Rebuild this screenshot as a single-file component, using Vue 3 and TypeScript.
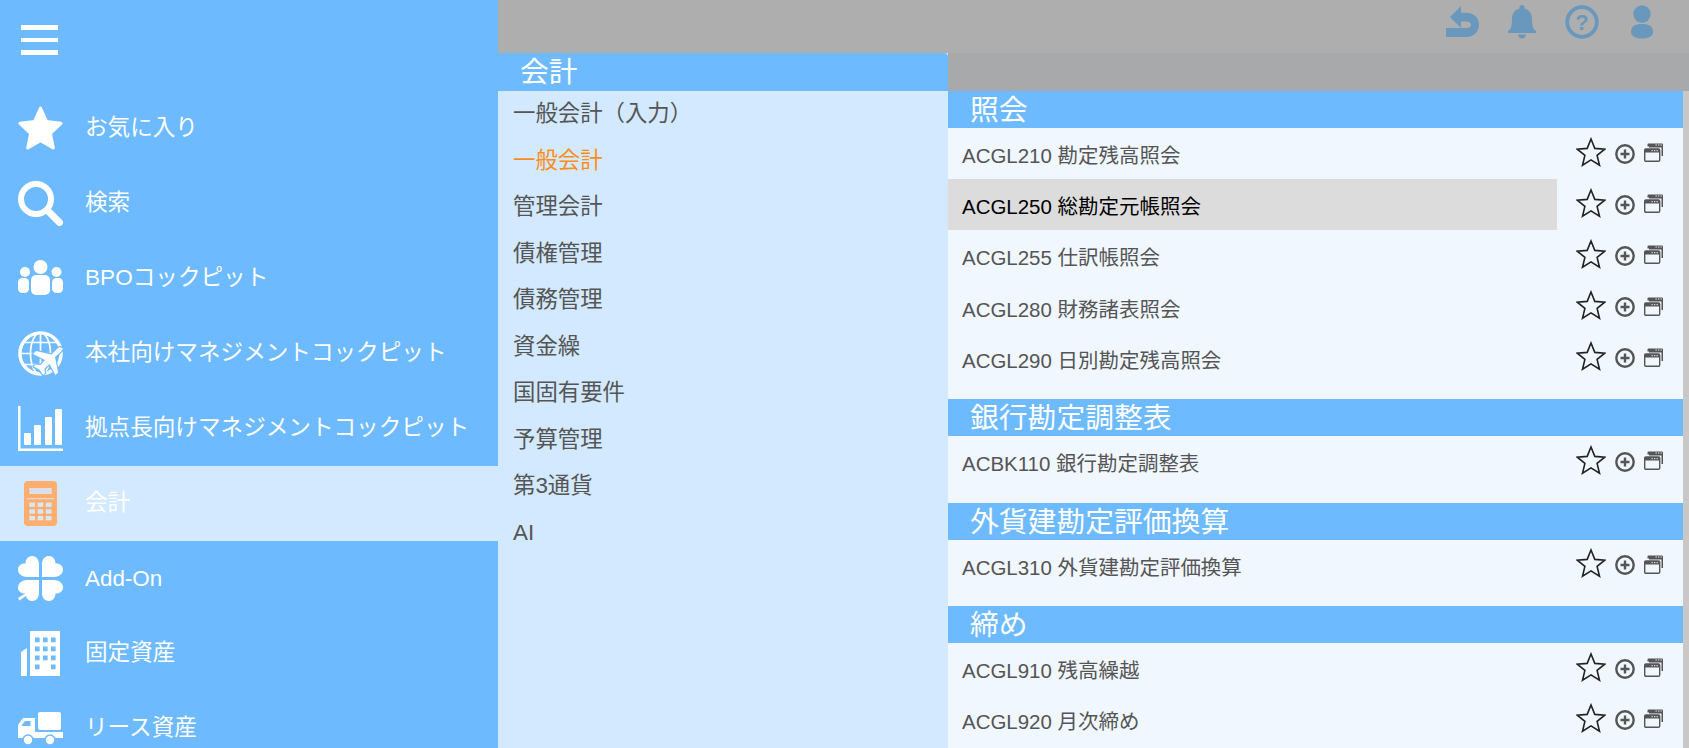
<script setup lang="ts">
interface SideItem { id: string; label: string; active?: boolean; latin?: boolean }
interface Section { title: string; rows: { code: string; hover?: boolean }[] }

const sideItems: SideItem[] = [
  { id: 'star', label: 'お気に入り' },
  { id: 'search', label: '検索' },
  { id: 'group', label: 'BPOコックピット' },
  { id: 'globe', label: '本社向けマネジメントコックピット' },
  { id: 'chart', label: '拠点長向けマネジメントコックピット' },
  { id: 'calc', label: '会計', active: true },
  { id: 'clover', label: 'Add-On', latin: true },
  { id: 'building', label: '固定資産' },
  { id: 'truck', label: 'リース資産' },
]
const midItems = ['一般会計（入力）', '一般会計', '管理会計', '債権管理', '債務管理', '資金繰', '国固有要件', '予算管理', '第3通貨', 'AI']
const sections: Section[] = [
  { title: '照会', rows: [
    { code: 'ACGL210 勘定残高照会' },
    { code: 'ACGL250 総勘定元帳照会', hover: true },
    { code: 'ACGL255 仕訳帳照会' },
    { code: 'ACGL280 財務諸表照会' },
    { code: 'ACGL290 日別勘定残高照会' },
  ] },
  { title: '銀行勘定調整表', rows: [{ code: 'ACBK110 銀行勘定調整表' }] },
  { title: '外貨建勘定評価換算', rows: [{ code: 'ACGL310 外貨建勘定評価換算' }] },
  { title: '締め', rows: [{ code: 'ACGL910 残高繰越' }, { code: 'ACGL920 月次締め' }] },
]
const winCols = [0, 1, 2]
const winRows = [0, 1, 2]
</script>

<template>
  <div class="app">
    <aside class="side">
      <div class="burger"><span></span><span></span><span></span></div>
      <div v-for="it in sideItems" :key="it.id" class="side-item" :class="{ active: it.active }">
        <svg class="side-icon" viewBox="0 0 45 45" width="45" height="45">
          <path v-if="it.id === 'star'" d="M22.5 2 L28.6 15.6 L43 17.3 L32.4 27.3 L35.3 42 L22.5 34.7 L9.7 42 L12.6 27.3 L2 17.3 L16.4 15.6 Z" fill="#fff" stroke="#fff" stroke-width="3" stroke-linejoin="round" />
          <g v-else-if="it.id === 'search'" fill="none" stroke="#fff">
            <circle cx="18" cy="18" r="15" stroke-width="6" />
            <path d="M31.5 31.5 L41.5 41.5" stroke-width="7" stroke-linecap="round" />
          </g>
          <g v-else-if="it.id === 'group'" fill="#fff">
            <circle cx="22.5" cy="11" r="7" />
            <circle cx="7" cy="16" r="5" />
            <circle cx="38.5" cy="16" r="5" />
            <rect x="0" y="22" width="11" height="15" rx="4.5" />
            <rect x="34" y="22" width="11" height="15" rx="4.5" />
            <rect x="13" y="19" width="19" height="20" rx="5" />
          </g>
          <g v-else-if="it.id === 'globe'">
            <g fill="none" stroke="#fff">
              <circle cx="22.5" cy="22.5" r="20.6" stroke-width="3.4" />
              <ellipse cx="22.5" cy="22.5" rx="10" ry="20.8" stroke-width="1.7" />
              <path d="M22.5 2 V43 M2 22.5 H43 M5 11.5 H40 M5 33.5 H40" stroke-width="1.7" />
            </g>
            <path d="M45 18 C43 15.5 41 16 39 18 L33.5 23.5 L18 20 L15 23 L27 29 L22.5 34 L17.5 33.5 L15.5 35.5 L21.5 38.5 L25 44 L27 42 L26.5 37.5 L31.5 33 L37.5 44 L40 41.5 L37 26 L43 20.5 Z" fill="#fff" stroke="#6dbaff" stroke-width="2.4" stroke-linejoin="round" paint-order="stroke" />
          </g>
          <g v-else-if="it.id === 'chart'" fill="#fff">
            <rect x="0" y="0" width="2.5" height="45" />
            <rect x="0" y="42.5" width="45" height="2.5" />
            <rect x="6" y="27" width="7" height="12" rx="1" />
            <rect x="16" y="19" width="7" height="20" rx="1" />
            <rect x="27" y="11" width="7" height="28" rx="1" />
            <rect x="37" y="3" width="7" height="36" rx="1" />
          </g>
          <g v-else-if="it.id === 'calc'">
            <rect x="6" y="0" width="33" height="45" rx="4" fill="#ffae6e" />
            <rect x="11.3" y="7" width="22.4" height="6" fill="#d2e9ff" opacity=".85" />
            <rect x="9" y="17" width="27" height="1.3" fill="#d2e9ff" opacity=".7" />
            <template v-for="r in winRows" :key="r">
              <rect v-for="c in winCols" :key="c" :x="11.3 + c * 8.3" :y="21.6 + r * 6.7" width="5.6" height="4.3" fill="#d2e9ff" />
            </template>
          </g>
          <g v-else-if="it.id === 'clover'" fill="#fff">
            <path d="M21 21 H9 C3 21 0 17 0 13.5 C0 10 3 7.5 6.5 7.5 L7.5 7.5 C7.5 3 10.5 0 14 0 C18 0 21 3 21 8 Z" />
            <path d="M24 21 H36 C42 21 45 17 45 13.5 C45 10 42 7.5 38.5 7.5 L37.5 7.5 C37.5 3 34.5 0 31 0 C27 0 24 3 24 8 Z" />
            <path d="M21 24 H9 C3 24 0 28 0 31.5 C0 35 3 37.5 6.5 37.5 L7.5 37.5 C7.5 42 10.5 45 14 45 C18 45 21 42 21 37 Z" />
            <path d="M24 24 H36 C42 24 45 28 45 31.5 C45 35 42 37.5 38.5 37.5 L37.5 37.5 C37.5 42 34.5 45 31 45 C27 45 24 42 24 37 Z" />
            <path d="M0 42 L8 37 L9.5 39 L1.5 44.5 Z" />
          </g>
          <g v-else-if="it.id === 'building'">
            <path d="M12 0 H42 V45 H12 Z M3 45 V21 L9 17 V45 Z" fill="#fff" />
            <g fill="#6dbaff">
              <template v-for="r in [0, 1, 2, 3]" :key="r">
                <rect v-for="c in winCols" :key="c" v-show="!(r === 3 && c === 1)" :x="17 + c * 8" :y="6.5 + r * 9" width="4.6" height="4.8" />
              </template>
            </g>
          </g>
          <g v-else-if="it.id === 'truck'">
            <rect x="20" y="6" width="23" height="18" rx="2" fill="#fff" />
            <path d="M5 12 H17 V26 H45 V32 H0 V19 Z" fill="#fff" />
            <path d="M3.5 19.5 L7 15 H12.5 V20 H3.5 Z" fill="#6dbaff" />
            <circle cx="10" cy="34" r="5" fill="#fff" stroke="#6dbaff" stroke-width="1.6" />
            <circle cx="32" cy="34" r="5" fill="#fff" stroke="#6dbaff" stroke-width="1.6" />
          </g>
        </svg>
        <span class="side-label" :class="{ latin: it.latin }">{{ it.label }}</span>
      </div>
    </aside>

    <div class="main">
      <header class="topbar">
        <div class="top-icon">
          <svg viewBox="0 0 33 31" width="33" height="31" fill="#6a98bd"><path d="M4 11 L15 0 V6.7 H20 C28 6.7 33 12 33 18.8 C33 25.8 28 31 20 31 H0 V22 H20 C23 22 25 21 25 18.8 C25 16.5 23 15.5 20 15.5 H15 V22 Z" /></svg>
        </div>
        <div class="top-icon">
          <svg viewBox="0 0 28 34" width="28" height="34" fill="#6a98bd"><path d="M14 0 C15.5 0 16.5 1 16.5 2.5 L16.5 3.5 C22 5 24 9 24 14 C24 21 25 24 28 26 V28 H0 V26 C3 24 4 21 4 14 C4 9 6 5 11.5 3.5 L11.5 2.5 C11.5 1 12.5 0 14 0 Z M10 29.5 H18 C17.5 32 16 33.5 14 33.5 C12 33.5 10.5 32 10 29.5 Z" /></svg>
        </div>
        <div class="top-icon">
          <svg viewBox="0 0 34 34" width="34" height="34"><circle cx="17" cy="17" r="14.8" fill="none" stroke="#6a98bd" stroke-width="3.8" /><text x="17" y="24.5" text-anchor="middle" class="q">?</text></svg>
        </div>
        <div class="top-icon">
          <svg viewBox="0 0 24 34" width="24" height="34" fill="#6a98bd"><circle cx="12" cy="9" r="8.7" /><path d="M1 27 C1 21 5 19 12 19 C19 19 23 21 23 27 C23 31 19 33.5 12 33.5 C5 33.5 1 31 1 27 Z" /></svg>
        </div>
      </header>

      <div class="cols">
        <section class="mid">
          <h2 class="mid-head">会計</h2>
          <ul class="mid-list">
            <li v-for="(m, i) in midItems" :key="i" :class="{ current: i === 1 }">{{ m }}</li>
          </ul>
        </section>

        <section class="detail">
          <div class="detail-spacer"></div>
          <div class="detail-body">
            <div class="sections">
              <div v-for="s in sections" :key="s.title" class="sect">
                <h3 class="sect-head">{{ s.title }}</h3>
                <div v-for="r in s.rows" :key="r.code" class="row">
                  <div class="row-name" :class="{ hover: r.hover }">{{ r.code }}</div>
                  <svg class="row-star" viewBox="0 0 30 30" width="30" height="30"><path d="M15 2 L18.8 11.4 L28.8 12.1 L21.1 18.4 L23.5 28.2 L15 22.9 L6.5 28.2 L8.9 18.4 L1.2 12.1 L11.2 11.4 Z" fill="none" stroke="#222" stroke-width="1.6" stroke-linejoin="miter" /></svg>
                  <svg class="row-plus" viewBox="0 0 20 20" width="20" height="20"><circle cx="10" cy="10" r="8.7" fill="none" stroke="#555" stroke-width="2.4" /><path d="M5.5 10 H14.5 M10 5.5 V14.5" stroke="#555" stroke-width="2.4" /></svg>
                  <svg class="row-win" viewBox="0 0 19 19" width="19" height="19">
                    <path d="M3.5 3.5 V1.5 Q3.5 0.5 4.5 0.5 H18 Q19 0.5 19 1.5 V13 H17.5 V4.5 H5 V3.5 Z" fill="#555" />
                    <path d="M11.5 2 H12.8 M14 2 H15.3 M16.5 2 H17.8" stroke="#f0f7ff" stroke-width="1" />
                    <rect x="0.7" y="6" width="15" height="12.3" rx="1.2" fill="none" stroke="#555" stroke-width="1.4" />
                    <rect x="0.7" y="6" width="15" height="3.5" fill="#555" />
                    <path d="M7.5 7.7 H8.8 M10 7.7 H11.3 M12.5 7.7 H13.8" stroke="#f0f7ff" stroke-width="1" />
                  </svg>
                </div>
              </div>
            </div>
            <div class="scroll"></div>
          </div>
        </section>
      </div>
    </div>
  </div>
</template>

<style>
html, body { margin: 0; padding: 0; overflow: hidden; }
</style>

<style scoped>
.app {
  display: flex;
  width: 1689px;
  height: 748px;
  overflow: hidden;
  font-family: "Liberation Sans", "Noto Sans CJK JP", sans-serif;
  text-spacing-trim: space-all;
  background: #aeaeae;
}
.side {
  width: 498px;
  flex: none;
  background: #6dbaff;
  color: #fff;
  overflow: hidden;
}
.burger {
  height: 91px;
  box-sizing: border-box;
  padding: 25px 0 0 21px;
  display: flex;
  flex-direction: column;
  gap: 8px;
}
.burger span { display: block; width: 37px; height: 4.5px; background: #fff; }
.side-item {
  height: 75px;
  display: flex;
  align-items: center;
  padding-left: 18px;
  gap: 22px;
}
.side-item.active { background: #d2e9ff; }
.side-icon { flex: none; display: block; }
.side-label { font-size: 22.6px; white-space: nowrap; margin-bottom: 6.5px; }
.side-label.latin { margin-bottom: 0; font-size: 22.4px; }
.main { flex: 1; display: flex; flex-direction: column; min-width: 0; }
.topbar {
  height: 53px;
  flex: none;
  display: flex;
  justify-content: flex-end;
  align-items: flex-start;
  padding-right: 17px;
  padding-top: 4.5px;
  box-sizing: border-box;
  background: #aeaeae;
}
.top-icon { width: 60px; height: 34px; display: flex; align-items: center; justify-content: center; }
.q { font: bold 22px "Liberation Sans", sans-serif; fill: #6a98bd; }
.cols { flex: 1; display: flex; min-height: 0; }
.mid { width: 450px; flex: none; background: #d2e9ff; }
.mid-head {
  margin: 0;
  height: 38px;
  line-height: 38px;
  padding-left: 22px;
  background: #6dbaff;
  color: #fff;
  font-size: 28.8px;
  font-weight: 400;
  border-top-right-radius: 4px;
}
.mid-list { list-style: none; margin: 0; padding: 0 0 0 15px; color: #555; font-size: 22.4px; }
.mid-list li { height: 46.5px; line-height: 46px; }
.mid-list li.current { color: #ff8c1a; }
.detail { flex: 1; min-width: 0; display: flex; flex-direction: column; }
.detail-spacer { height: 38px; flex: none; background: #a8a9aa; }
.detail-body { flex: 1; display: flex; min-height: 0; }
.sections { flex: 1; min-width: 0; background: #f0f7ff; overflow: hidden; }
.scroll { width: 6px; flex: none; background: #c8c8c8; }
.sect { padding-bottom: 15.3px; }
.sect-head {
  margin: 0;
  height: 37px;
  line-height: 39px;
  padding-left: 22px;
  background: #6dbaff;
  color: #fff;
  font-size: 28.8px;
  font-weight: 400;
}
.row { height: 51.2px; display: flex; align-items: center; }
.row-name {
  width: 609px;
  height: 51px;
  line-height: 56px;
  flex: none;
  box-sizing: border-box;
  padding-left: 14px;
  font-size: 20.48px;
  color: #555;
}
.row-name.hover { background: #dcdcdc; color: #000; }
.row-star { margin-left: 19px; flex: none; margin-top: -4px; }
.row-plus { margin-left: 9px; flex: none; }
.row-win { margin-left: 9px; flex: none; margin-top: -2px; }
</style>
